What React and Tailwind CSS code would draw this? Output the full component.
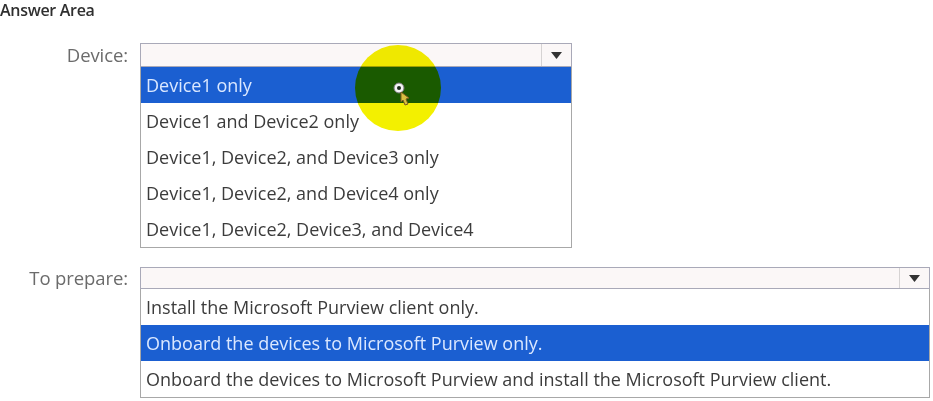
import React from 'react';

const deviceOptions = [
  'Device1 only',
  'Device1 and Device2 only',
  'Device1, Device2, and Device3 only',
  'Device1, Device2, and Device4 only',
  'Device1, Device2, Device3, and Device4',
];

const prepareOptions = [
  'Install the Microsoft Purview client only.',
  'Onboard the devices to Microsoft Purview only.',
  'Onboard the devices to Microsoft Purview and install the Microsoft Purview client.',
];

function Arrow() {
  return (
    <div className="w-[30px] h-full border-l border-[#d6d3d3] flex items-center justify-center">
      <svg width="11" height="7" viewBox="0 0 11 7">
        <path d="M0 0 L11 0 L5.5 7 Z" fill="#333" />
      </svg>
    </div>
  );
}

function OpenSelect({ label, options, selected, width, boxH }) {
  return (
    <div className="flex">
      <div
        className="w-[128px] flex items-center justify-end text-[#6b6b6b] text-[18.5px] tracking-[-0.1px]"
        style={{ height: boxH }}
      >
        {label}
      </div>
      <div className="ml-[12px]" style={{ width }}>
        <div className="border border-[#a9a9b8] bg-[#fbf7f7] flex justify-end" style={{ height: boxH }}>
          <Arrow />
        </div>
        <div className="border border-t-0 border-[#a8a8a8] bg-white">
          {options.map((opt, i) => (
            <div
              key={opt}
              className={
                'h-[36px] flex items-center px-[5px] text-[18px] ' +
                (i === selected ? 'bg-[#1b5fd1] text-[#dbe8ff]' : 'text-[#3c3c3c]')
              }
            >
              {opt}
            </div>
          ))}
        </div>
      </div>
    </div>
  );
}

export default function App() {
  return (
    <div className="relative w-[933px] h-[401px] bg-white overflow-hidden font-['Open_Sans',sans-serif]">
      <div className="h-[20px] flex items-center text-[16px] font-semibold text-[#2f2f2f] tracking-[-0.3px] leading-[20px]">
        Answer Area
      </div>
      <div className="mt-[23px]">
        <OpenSelect label="Device:" options={deviceOptions} selected={0} width={432} boxH={24} />
      </div>
      <div className="mt-[19px]">
        <OpenSelect label="To prepare:" options={prepareOptions} selected={1} width={790} boxH={22} />
      </div>

      {/* cursor highlight */}
      <div className="absolute left-[355px] top-[45px] w-[86px] h-[86px] rounded-full bg-[#f3f000] mix-blend-multiply" />
      <svg className="absolute left-[392px] top-[81px]" width="22" height="26" viewBox="0 0 22 26">
        <circle cx="7" cy="7" r="5" fill="#f4f4f4" stroke="#777" strokeWidth="1" />
        <circle cx="7" cy="7" r="2" fill="#1a2a1a" />
        <path d="M9 11 L17 17 L14 18 L16 23 L13 24 L11 19 L9 21 Z" fill="#d9c040" stroke="#7a5a20" strokeWidth="1" />
      </svg>
    </div>
  );
}
